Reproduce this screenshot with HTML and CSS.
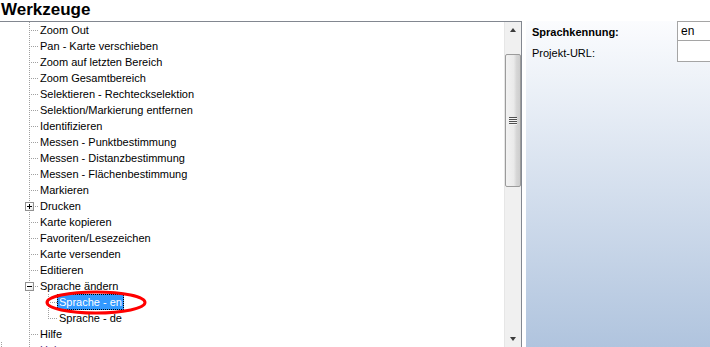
FILE: index.html
```html
<!DOCTYPE html>
<html>
<head>
<meta charset="utf-8">
<link rel="stylesheet" href="styles.css">
</head>
<body>
<div class="title">Werkzeuge</div>
<div class="main">
  <div class="tree">
    <div class="list">
      <div class="row"><span class="sp"></span><span class="br"></span><span class="lbl">Zoom Out</span></div>
      <div class="row"><span class="sp"></span><span class="br"></span><span class="lbl">Pan - Karte verschieben</span></div>
      <div class="row"><span class="sp"></span><span class="br"></span><span class="lbl">Zoom auf letzten Bereich</span></div>
      <div class="row"><span class="sp"></span><span class="br"></span><span class="lbl">Zoom Gesamtbereich</span></div>
      <div class="row"><span class="sp"></span><span class="br"></span><span class="lbl">Selektieren - Rechteckselektion</span></div>
      <div class="row"><span class="sp"></span><span class="br"></span><span class="lbl">Selektion/Markierung entfernen</span></div>
      <div class="row"><span class="sp"></span><span class="br"></span><span class="lbl">Identifizieren</span></div>
      <div class="row"><span class="sp"></span><span class="br"></span><span class="lbl">Messen - Punktbestimmung</span></div>
      <div class="row"><span class="sp"></span><span class="br"></span><span class="lbl">Messen - Distanzbestimmung</span></div>
      <div class="row"><span class="sp"></span><span class="br"></span><span class="lbl">Messen - Flächenbestimmung</span></div>
      <div class="row"><span class="sp"></span><span class="br"></span><span class="lbl">Markieren</span></div>
      <div class="row"><span class="sp"></span><span class="br"><span class="box"><svg width="7" height="7" viewBox="0 0 7 7"><path d="M1 3.5H6M3.5 1V6" stroke="#000" stroke-width="1"/></svg></span></span><span class="lbl">Drucken</span></div>
      <div class="row"><span class="sp"></span><span class="br"></span><span class="lbl">Karte kopieren</span></div>
      <div class="row"><span class="sp"></span><span class="br"></span><span class="lbl">Favoriten/Lesezeichen</span></div>
      <div class="row"><span class="sp"></span><span class="br"></span><span class="lbl">Karte versenden</span></div>
      <div class="row"><span class="sp"></span><span class="br"></span><span class="lbl">Editieren</span></div>
      <div class="row"><span class="sp"></span><span class="br"><span class="box"><svg width="7" height="7" viewBox="0 0 7 7"><path d="M1 3.5H6" stroke="#000" stroke-width="1"/></svg></span></span><span class="lbl">Sprache ändern</span></div>
      <div class="row"><span class="sp"></span><span class="vl"></span><span class="br"></span><span class="lbl sel">Sprache - en</span></div>
      <div class="row"><span class="sp"></span><span class="vl"></span><span class="br last"></span><span class="lbl">Sprache - de</span></div>
      <div class="row"><span class="sp"></span><span class="br"></span><span class="lbl">Hilfe</span></div>
      <div class="row"><span class="sp root"></span><span class="br"></span><span class="lbl dim">Hal</span></div>
    </div>
    <div class="scroll">
      <div class="sbtn"><span class="up"></span></div>
      <div class="gap1"></div>
      <div class="thumb"><span class="grip"></span></div>
      <div class="track"></div>
      <div class="sbtn"><span class="down"></span></div>
    </div>
    <svg class="mark" width="102" height="26" viewBox="0 0 102 26"><ellipse cx="51" cy="12.5" rx="49" ry="10.5" fill="none" stroke="#ff0000" stroke-width="3"/></svg>
  </div>
  <div class="panel">
    <div class="form">
      <div class="flabel bold">Sprachkennung:</div>
      <div class="input first">en</div>
      <div class="flabel">Projekt-URL:</div>
      <div class="input"></div>
    </div>
  </div>
</div>
</body>
</html>
```

FILE: styles.css
```css
html, body {
  margin: 0;
  padding: 0;
  background: #fff;
}
body {
  width: 710px;
  height: 347px;
  overflow: hidden;
  font-family: "Liberation Sans", Arial, sans-serif;
  color: #000;
}
.title {
  height: 21px;
  font-size: 17px;
  font-weight: bold;
  line-height: 19px;
  padding-left: 1px;
}
.main {
  display: flex;
  height: 326px;
  gap: 4px;
}
.tree {
  position: relative;
  width: 521px;
  border-top: 1px solid #828790;
  border-right: 1px solid #828790;
  display: flex;
  background: #fff;
}
.list {
  flex: 1;
  overflow: hidden;
  font-size: 11px;
}
.row {
  display: flex;
  height: 16px;
  line-height: 16px;
  white-space: nowrap;
}
.sp {
  width: 24px;
  flex: none;
}
.sp.root {
  background: repeating-linear-gradient(to bottom, #a0a0a0 0 1px, transparent 1px 2px) 1px 0 / 1px 100% no-repeat;
}
.br {
  width: 14px;
  flex: none;
  display: flex;
  align-items: flex-start;
  background:
    repeating-linear-gradient(to bottom, #a0a0a0 0 1px, transparent 1px 2px) 5px 0 / 1px 100% no-repeat,
    repeating-linear-gradient(to right, #a0a0a0 0 1px, transparent 1px 2px) 7px 8px / 8px 1px no-repeat;
}
.br.last {
  background:
    repeating-linear-gradient(to bottom, #a0a0a0 0 1px, transparent 1px 2px) 5px 0 / 1px 9px no-repeat,
    repeating-linear-gradient(to right, #a0a0a0 0 1px, transparent 1px 2px) 7px 8px / 8px 1px no-repeat;
}
.vl {
  width: 19px;
  flex: none;
  background: repeating-linear-gradient(to bottom, #a0a0a0 0 1px, transparent 1px 2px) 5px 0 / 1px 100% no-repeat;
}
.box {
  margin: 4px 0 0 1px;
  width: 7px;
  height: 7px;
  border: 1px solid #919191;
  background: linear-gradient(135deg, #fff 40%, #e2e2e2);
  display: flex;
}
.box svg {
  display: block;
}
.lbl {
  padding: 0 2px;
  height: 16px;
}
.lbl.sel {
  background: #3399ff;
  color: #fff;
  outline: 1px dotted #000;
  outline-offset: -1px;
}
.lbl.dim {
  color: #4b2a7a;
}
.scroll {
  width: 16px;
  flex: none;
  display: flex;
  flex-direction: column;
  background: #f0f0f0;
  border-left: 1px solid #e6e6e6;
}
.sbtn {
  height: 16px;
  flex: none;
  display: flex;
  align-items: center;
  justify-content: center;
}
.up {
  width: 0;
  height: 0;
  border-left: 3.5px solid transparent;
  border-right: 3.5px solid transparent;
  border-bottom: 4px solid #3c3c3c;
}
.down {
  width: 0;
  height: 0;
  border-left: 3.5px solid transparent;
  border-right: 3.5px solid transparent;
  border-top: 4px solid #3c3c3c;
}
.gap1 {
  height: 16px;
  flex: none;
}
.thumb {
  height: 131px;
  flex: none;
  border: 1px solid #9b9b9b;
  border-radius: 2px;
  background: linear-gradient(to right, #f2f2f2 0%, #eaeaea 55%, #d6d6d6 75%, #cdcdcd 100%);
  display: flex;
  justify-content: center;
  padding-top: 62px;
  box-sizing: content-box;
  height: 69px;
}
.grip {
  width: 8px;
  height: 8px;
  background: repeating-linear-gradient(to bottom, #505050 0 1px, #f4f4f4 1px 2px);
}
.track {
  flex: 1;
}
.mark {
  position: absolute;
  left: 45px;
  top: 268px;
}
.panel {
  flex: 1;
  background: linear-gradient(to bottom, #fbfcfe 0%, #b0c4de 100%);
  padding-left: 6px;
  font-size: 11px;
}
.form {
  display: grid;
  grid-template-columns: 145px 1fr;
  grid-template-rows: 20px 21px;
}
.flabel {
  display: flex;
  align-items: center;
  padding-top: 2px;
}
.flabel.bold {
  font-weight: bold;
}
.input {
  border: 1px solid #a5a5a5;
  border-top: 0;
  border-right: 0;
  background: #fff;
  display: flex;
  align-items: center;
  padding-left: 3px;
  font-size: 12px;
}
.input.first {
  border-top: 1px solid #a5a5a5;
}
```
